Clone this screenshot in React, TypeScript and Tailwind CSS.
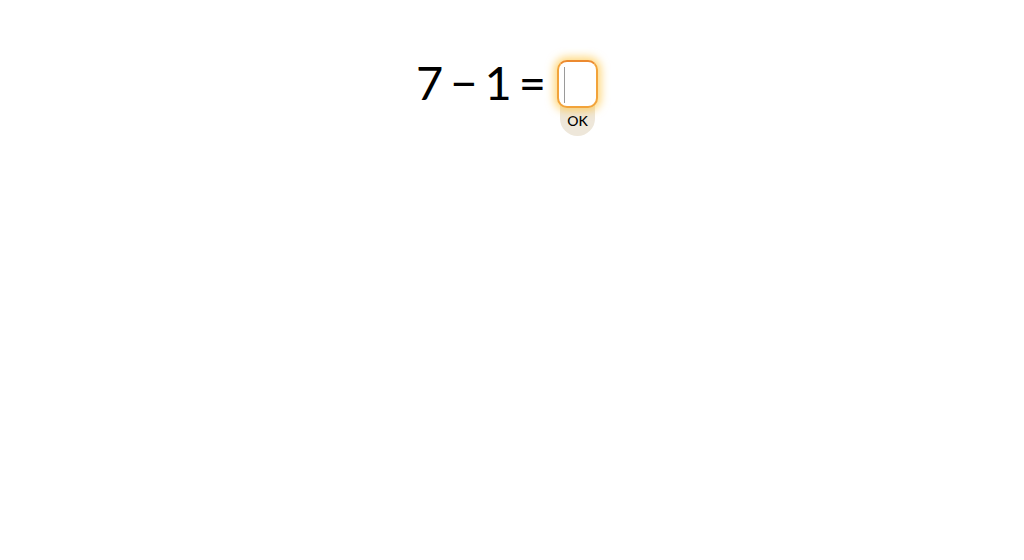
import React from "react";

export default function App() {
  return (
    <div className="w-[1024px] h-[560px] bg-white" style={{ fontFamily: "Lato, 'Noto Sans', sans-serif" }}>
      <div className="flex justify-center pt-[56px] pr-[10px]">
        <div className="flex items-start">
          <div className="text-[47px] leading-[54px] text-black -mt-[1px] mr-[11px] [word-spacing:-5px]">
            7 − 1 =
          </div>
          <div className="flex flex-col items-center mt-[4px]">
            <div className="relative z-10 w-[41px] h-[48px] rounded-[10px] border-2 border-[#f2a33a] border-t-[#ec8a30] bg-white shadow-[0_0_8px_3px_rgba(255,190,40,0.6)]">
              <div className="absolute left-[5px] top-[5px] w-px h-[36px] bg-[#9a9a9a]" />
            </div>
            <div className="w-[35px] h-[32px] -mt-[4px] pt-[6px] rounded-b-full bg-[#eee7da] text-[14px] font-medium leading-[22px] text-black text-center">
              OK
            </div>
          </div>
        </div>
      </div>
    </div>
  );
}
